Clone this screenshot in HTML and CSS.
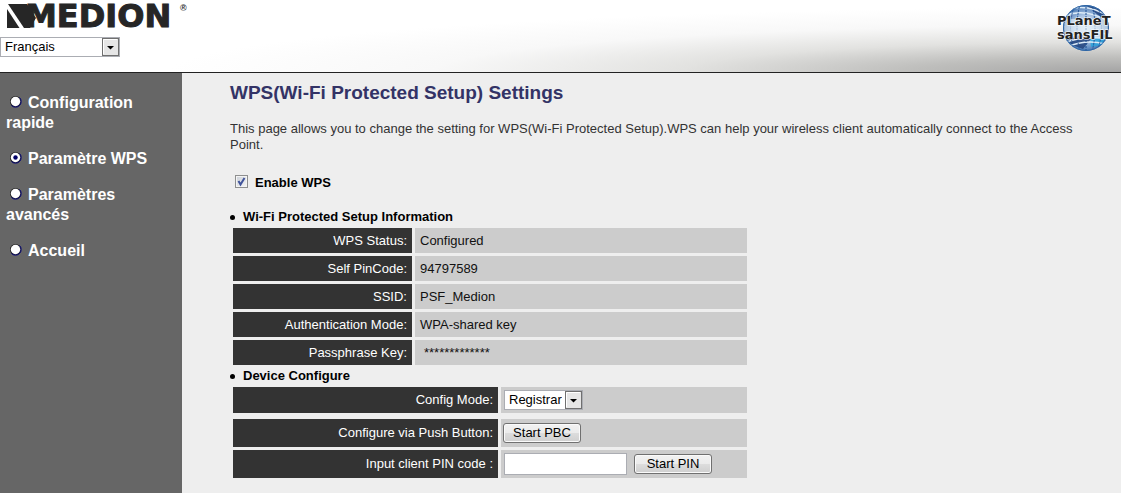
FILE: index.html
```
<!DOCTYPE html>
<html lang="fr">
<head>
<meta charset="utf-8">
<title>WPS Settings</title>
<link rel="stylesheet" href="styles.css">
</head>
<body>
<header class="header">
  <div class="brand">
    <svg class="medion" width="192" height="34" viewBox="0 0 192 34" role="img" aria-label="Medion">
      <path d="M7 9V28H19.500Z" fill="#262626"/>
      <path d="M8 4H27L36 18L30 28H24Z" fill="#262626"/>
      <text class="medion-name" x="25" y="27">MEDION</text>
      <text class="medion-reg" x="180" y="11">®</text>
    </svg>
    <span class="select-box language">
      <select class="select" aria-label="Langue"><option>Français</option><option>English</option><option>Deutsch</option></select>
      <svg class="arrow" width="17" height="18" viewBox="0 0 17 18" aria-hidden="true"><rect x="0.5" y="0.5" width="16" height="17" fill="#e6e6e6" stroke="#707070"/><path d="M1.5 16V1.5H15" stroke="#fff" fill="none"/><path d="M5 8H12L8.500 11.500Z"/></svg>
    </span>
  </div>
  <svg class="planet" width="62" height="50" viewBox="0 0 62 50" role="img" aria-label="Planet Sansfil">
    <defs>
      <radialGradient id="globe" cx="50%" cy="50%" r="52%"><stop offset="0" stop-color="#e8f2fb"/><stop offset=".55" stop-color="#a9c3e2"/><stop offset="1" stop-color="#3b6eae"/></radialGradient>
      <clipPath id="disc"><circle cx="31" cy="25" r="23"/></clipPath>
    </defs>
    <circle cx="31" cy="25" r="23" fill="url(#globe)"/>
    <g clip-path="url(#disc)" fill="none">
      <path d="M31 2L52 9 54 18 43 12ZM10 34L25 30 36 36 28 46 17 42Z" fill="#1f3f78" opacity=".8"/>
      <path d="M35 36L52 32 47 42 36 44Z" fill="#28a4dc" opacity=".8"/>
      <path d="M8 9Q30 -2 54 14M6 14Q30 3 56 20M6 36Q30 28 56 31M8 40Q30 32 54 36M12 44Q31 36 50 41" stroke="#dcebf7" stroke-width="1.500"/>
      <path d="M15 1Q4 25 15 49M20 1Q11 25 20 49M25 1Q19 25 25 49M31 1V49M37 1Q43 25 37 49M42 1Q51 25 42 49M47 1Q58 25 47 49" stroke="#1c4f93" stroke-dasharray="2 1"/>
      <path d="M9 16H53V35H9Z" fill="#e2ecf5" opacity=".65"/>
    </g>
    <circle cx="31" cy="25" r="22.500" fill="none" stroke="#2e66a5"/>
    <text class="planet-name" x="2" y="22">PLaneT</text>
    <text class="planet-name" x="2" y="36">sansFIL</text>
  </svg>
</header>
<div class="layout">
  <nav class="menu">
    <a class="menu-link" href="#rapide"><svg class="bullet" width="13" height="13" viewBox="0 0 13 13" aria-hidden="true"><circle cx="6.500" cy="6.500" r="5.500" fill="#222"/><path d="M10.500 2.500A5.500 5.500 0 0 1 2.500 10.500" stroke="#00007a" fill="none"/><circle cx="6.500" cy="6.500" r="4.700" fill="#fff"/></svg>Configuration rapide</a>
    <a class="menu-link" href="#wps" aria-current="page"><svg class="bullet" width="13" height="13" viewBox="0 0 13 13" aria-hidden="true"><circle cx="6.500" cy="6.500" r="5.500" fill="#222"/><path d="M10.500 2.500A5.500 5.500 0 0 1 2.500 10.500" stroke="#00007a" fill="none"/><circle cx="6.500" cy="6.500" r="4.700" fill="#fff"/><circle cx="6.500" cy="6.500" r="2.200" fill="#000066"/></svg>Paramètre WPS</a>
    <a class="menu-link" href="#avances"><svg class="bullet" width="13" height="13" viewBox="0 0 13 13" aria-hidden="true"><circle cx="6.500" cy="6.500" r="5.500" fill="#222"/><path d="M10.500 2.500A5.500 5.500 0 0 1 2.500 10.500" stroke="#00007a" fill="none"/><circle cx="6.500" cy="6.500" r="4.700" fill="#fff"/></svg>Paramètres avancés</a>
    <a class="menu-link" href="#accueil"><svg class="bullet" width="13" height="13" viewBox="0 0 13 13" aria-hidden="true"><circle cx="6.500" cy="6.500" r="5.500" fill="#222"/><path d="M10.500 2.500A5.500 5.500 0 0 1 2.500 10.500" stroke="#00007a" fill="none"/><circle cx="6.500" cy="6.500" r="4.700" fill="#fff"/></svg>Accueil</a>
  </nav>
  <main class="content">
    <h1 class="title">WPS(Wi-Fi Protected Setup) Settings</h1>
    <p class="intro">This page allows you to change the setting for WPS(Wi-Fi Protected Setup).WPS can help your wireless client automatically connect to the Access Point.</p>
    <label class="enable">
      <span class="check-box">
        <input class="check" type="checkbox" checked>
        <svg class="tick" width="13" height="13" viewBox="0 0 13 13" aria-hidden="true"><path d="M3.500 6L5.500 9.500L9.500 3" fill="none" stroke="#41549b" stroke-width="2"/></svg>
      </span>
      Enable WPS
    </label>
    <h2 class="section">Wi-Fi Protected Setup Information</h2>
    <table class="info">
      <tr><th scope="row">WPS Status:</th><td>Configured</td></tr>
      <tr><th scope="row">Self PinCode:</th><td>94797589</td></tr>
      <tr><th scope="row">SSID:</th><td>PSF_Medion</td></tr>
      <tr><th scope="row">Authentication Mode:</th><td>WPA-shared key</td></tr>
      <tr><th scope="row">Passphrase Key:</th><td class="key">*************</td></tr>
    </table>
    <h2 class="section">Device Configure</h2>
    <form class="device">
      <div class="row mode">
        <label class="row-label" for="mode">Config Mode:</label>
        <div class="row-field">
          <span class="select-box registrar">
            <select class="select" id="mode"><option>Registrar</option><option>Enrollee</option></select>
            <svg class="arrow" width="17" height="18" viewBox="0 0 17 18" aria-hidden="true"><rect x="0.5" y="0.5" width="16" height="17" fill="#e6e6e6" stroke="#707070"/><path d="M1.500 16V1.500H15" stroke="#fff" fill="none"/><path d="M5 8H12L8.500 11.500Z"/></svg>
          </span>
        </div>
      </div>
      <div class="row">
        <label class="row-label" for="pbc">Configure via Push Button:</label>
        <div class="row-field push"><button class="button" id="pbc" type="button">Start PBC</button></div>
      </div>
      <div class="row">
        <label class="row-label" for="pin">Input client PIN code :</label>
        <div class="row-field"><input class="pin" id="pin" type="text"><button class="button" type="button">Start PIN</button></div>
      </div>
    </form>
  </main>
</div>
</body>
</html>
```
FILE: styles.css
```
* { box-sizing: border-box; }
body {
  margin: 0;
  min-height: 100vh;
  display: flex;
  flex-direction: column;
  background: #eee;
  color: #000;
  font: 13px/16px "Liberation Sans", Arial, sans-serif;
}
.header {
  display: flex;
  justify-content: space-between;
  align-items: flex-start;
  height: 73px;
  border-bottom: 1px solid #222;
  background: #fff radial-gradient(ellipse 85% 90% at 100% 100%, #a4a4a4, #bebebc 22%, #e2e2e0 46%, #f8f8f8 72%, #fff);
}
.brand { display: flex; flex-direction: column; gap: 3px; }
.medion { display: block; overflow: visible; }
.medion-name {
  font: bold 32px "DejaVu Sans", sans-serif;
  fill: #262626;
  stroke: #262626;
  stroke-width: 1px;
}
.medion-reg { font: bold 9px "Liberation Sans", sans-serif; fill: #333; }
.planet { margin: 3px 4px 0 0; }
.planet-name {
  font: bold 13px "DejaVu Sans", sans-serif;
  fill: #222;
  stroke: #fff;
  stroke-width: 1px;
  paint-order: stroke;
}
.select-box { position: relative; display: block; }
.select {
  display: block;
  appearance: none;
  width: 100%;
  height: 20px;
  margin: 0;
  padding: 0 20px 0 4px;
  border: 1px solid #abadb3;
  border-radius: 0;
  background: #fff;
  color: #000;
  font: inherit;
}
.arrow { position: absolute; right: 1px; top: 1px; pointer-events: none; }
.language { width: 120px; }
.registrar { width: 79px; }
.layout { display: flex; flex: 1; }
.menu {
  flex: 0 0 182px;
  display: flex;
  flex-direction: column;
  gap: 16px;
  padding: 20px 6px;
  background: #666;
}
.menu-link { color: #fff; font-size: 16px; font-weight: bold; line-height: 20px; text-decoration: none; }
.bullet { margin: 0 6px 0 3px; }
.content { flex: 1; padding: 8px 24px 12px 48px; }
.title { margin: 0; color: #336; font-size: 19px; line-height: 24px; }
.intro { margin: 16px 0 0; color: #333; }
.enable { display: flex; align-items: center; gap: 7px; width: max-content; margin: 22px 0 0 5px; font-weight: bold; }
.check-box { position: relative; width: 13px; height: 16px; }
.check {
  appearance: none;
  display: block;
  width: 13px;
  height: 13px;
  margin: 0;
  border: 1px solid #8e8f8f;
  background: linear-gradient(135deg, #cbd0d8, #f6f6f6);
  box-shadow: inset 0 0 0 1px #f4f4f4;
}
.tick { position: absolute; left: 0; top: 0; pointer-events: none; }
.section { display: flex; align-items: center; gap: 8px; margin: 0; font-size: 13px; line-height: 16px; }
.section::before { content: ""; width: 5px; height: 5px; border-radius: 50%; background: #000; }
.enable + .section { margin-top: 18px; }
.info { width: 520px; max-width: 100%; table-layout: fixed; border-spacing: 3px; }
.info th, .info td { height: 25px; padding: 0 5px; }
.info th { width: 179px; background: #333; color: #fff; font-weight: normal; text-align: right; }
.info td { background: #ccc; color: #111; }
.info .key { padding-left: 9px; }
.device { display: flex; flex-direction: column; gap: 3px; max-width: 517px; padding: 3px 0 0 3px; }
.row { display: flex; gap: 3px; min-height: 28px; }
.mode { min-height: 26px; margin-bottom: 3px; }
.row-label { flex: 0 0 265px; display: flex; align-items: center; justify-content: flex-end; padding: 0 5px; background: #333; color: #fff; }
.row-field { flex: 1; display: flex; align-items: center; gap: 7px; padding: 0 3px; background: #ccc; }
.push { padding-left: 2px; }
.pin { width: 123px; height: 22px; border: 1px solid #abadb3; padding: 1px 3px; background: #fff; font: inherit; }
.button {
  width: 78px;
  height: 20px;
  padding: 0;
  border: 1px solid #707070;
  border-radius: 3px;
  background: linear-gradient(#f2f2f2, #ebebeb 50%, #ddd 50%, #cfcfcf);
  box-shadow: inset 0 0 0 1px #fafafa;
  color: #000;
  font: inherit;
}
```
